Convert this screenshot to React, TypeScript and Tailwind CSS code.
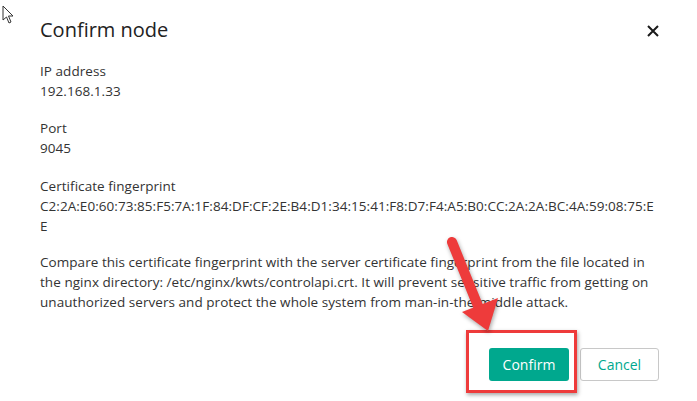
import React from "react";

export default function App() {
  const font = { fontFamily: "'Open Sans', Lato, sans-serif" };
  return (
    <div className="relative w-[697px] h-[401px] bg-white overflow-hidden text-[#333]" style={font}>
      {/* cursor */}
      <svg className="absolute left-[2px] top-[5px]" width="14" height="22" viewBox="0 0 14 22">
        <path d="M1 1 L1 15 L4.5 12 L7 18 L9 17 L6.5 11 L11 11 Z" fill="#fff" stroke="#333" strokeWidth="1" />
      </svg>
      <div className="flex flex-col px-[40px] pt-[17px]">
        <div className="flex items-center justify-between h-[26px]">
          <div className="text-[20px] text-[#222]">Confirm node</div>
          <svg width="14" height="14" viewBox="0 0 14 14" className="mr-[-3px] mt-[1px]">
            <path d="M2 2 L12 12 M12 2 L2 12" stroke="#1a1a1a" strokeWidth="2" />
          </svg>
        </div>
        <div className="mt-[18px] text-[13.5px] tracking-[0.05px] leading-[20px]">
          <div>IP address</div>
          <div>192.168.1.33</div>
        </div>
        <div className="mt-[17px] text-[13.5px] tracking-[0.05px] leading-[20px]">
          <div>Port</div>
          <div>9045</div>
        </div>
        <div className="mt-[18px] text-[13.5px] tracking-[0.05px] leading-[20px]">
          <div>Certificate fingerprint</div>
          <div>C2:2A:E0:60:73:85:F5:7A:1F:84:DF:CF:2E:B4:D1:34:15:41:F8:D7:F4:A5:B0:CC:2A:2A:BC:4A:59:08:75:E</div>
          <div>E</div>
        </div>
        <div className="mt-[16px] text-[13.5px] tracking-[0.05px] leading-[20px] w-[612px]">
          Compare this certificate fingerprint with the server certificate fingerprint from the file located in the nginx directory: /etc/nginx/kwts/controlapi.crt. It will prevent sensitive traffic from getting on unauthorized servers and protect the whole system from man-in-the-middle attack.
        </div>
        <div className="flex justify-end gap-[11px] mt-[36px] mr-[-2px]">
          <button className="w-[80px] h-[33px] rounded-[3px] bg-[#00a88e] text-white text-[14px]">Confirm</button>
          <button className="w-[79px] h-[33px] rounded-[3px] border border-[#c8c8c8] bg-white text-[#00a88e] text-[14px]">Cancel</button>
        </div>
      </div>
      {/* red highlight box */}
      <div className="absolute left-[466px] top-[330px] w-[111px] h-[63px] border-[3px] border-[#ee3b3b] shadow-[1px_2px_4px_rgba(0,0,0,0.35)]" />
      {/* arrow */}
      <svg className="absolute left-0 top-0" width="697" height="401" style={{ filter: "drop-shadow(1px 2px 2px rgba(0,0,0,0.35))" }}>
        <line x1="452" y1="242" x2="478" y2="306" stroke="#ee3b3b" strokeWidth="10" strokeLinecap="round" />
        <polygon points="462,312 498,298 488,331" fill="#ee3b3b" />
      </svg>
    </div>
  );
}
